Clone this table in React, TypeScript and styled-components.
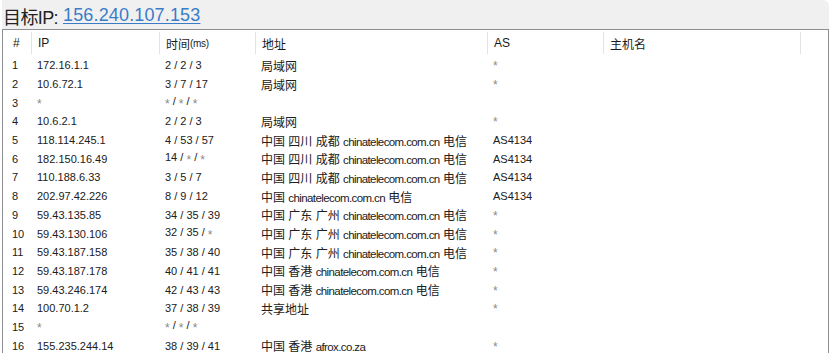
import React from "react";
import styled, { createGlobalStyle } from "styled-components";

const GlobalStyle = createGlobalStyle`
	html, body {
		margin: 0;
		padding: 0;
		background: #ffffff;
		overflow: hidden;
	}
	body {
		font-family: "Liberation Sans", "Noto Sans CJK SC", sans-serif;
		color: #1e1e1e;
	}
`;

const COLUMNS = "28px 128px 96px 232px 116px 197px 1fr";

const hops = [
	{ ip: "172.16.1.1", time: "2 / 2 / 3", addr: "局域网", as: "*" },
	{ ip: "10.6.72.1", time: "3 / 7 / 17", addr: "局域网", as: "*" },
	{ ip: "*", time: "* / * / *", addr: "", as: "" },
	{ ip: "10.6.2.1", time: "2 / 2 / 3", addr: "局域网", as: "*" },
	{ ip: "118.114.245.1", time: "4 / 53 / 57", addr: "中国 四川 成都 chinatelecom.com.cn 电信", as: "AS4134" },
	{ ip: "182.150.16.49", time: "14 / * / *", addr: "中国 四川 成都 chinatelecom.com.cn 电信", as: "AS4134" },
	{ ip: "110.188.6.33", time: "3 / 5 / 7", addr: "中国 四川 成都 chinatelecom.com.cn 电信", as: "AS4134" },
	{ ip: "202.97.42.226", time: "8 / 9 / 12", addr: "中国 chinatelecom.com.cn 电信", as: "AS4134" },
	{ ip: "59.43.135.85", time: "34 / 35 / 39", addr: "中国 广东 广州 chinatelecom.com.cn 电信", as: "*" },
	{ ip: "59.43.130.106", time: "32 / 35 / *", addr: "中国 广东 广州 chinatelecom.com.cn 电信", as: "*" },
	{ ip: "59.43.187.158", time: "35 / 38 / 40", addr: "中国 广东 广州 chinatelecom.com.cn 电信", as: "*" },
	{ ip: "59.43.187.178", time: "40 / 41 / 41", addr: "中国 香港 chinatelecom.com.cn 电信", as: "*" },
	{ ip: "59.43.246.174", time: "42 / 43 / 43", addr: "中国 香港 chinatelecom.com.cn 电信", as: "*" },
	{ ip: "100.70.1.2", time: "37 / 38 / 39", addr: "共享地址", as: "*" },
	{ ip: "*", time: "* / * / *", addr: "", as: "" },
	{ ip: "155.235.244.14", time: "38 / 39 / 41", addr: "中国 香港 afrox.co.za", as: "*" },
];

const Page = styled.div`
	height: 100vh;
	display: flex;
	flex-direction: column;
	padding: 0 2px;
	box-sizing: border-box;
`;

const TitleBar = styled.div`
	height: 29px;
	display: flex;
	align-items: center;
	padding: 2px 0 0 1px;
	box-sizing: border-box;
	background: #f0f0f0;
	border-top-right-radius: 6px;
	font-size: 18px;
	color: #222;
	white-space: nowrap;
`;

const TitleLabel = styled.span`
	letter-spacing: -0.6px;
`;

const IpLink = styled.a`
	color: #3a7cc8;
	text-decoration: underline;
	text-underline-offset: 2px;
	margin-left: 5px;
	letter-spacing: 0.15px;
`;

const ListFrame = styled.div`
	flex: 1;
	overflow: hidden;
	border: 1px solid #8e8f94;
	border-bottom: none;
	background: #fff;
`;

const HeaderRow = styled.div`
	display: grid;
	grid-template-columns: ${COLUMNS};
	height: 26px;
	align-items: center;
	font-size: 12px;
	color: #1a1a1a;
`;

const HeaderCell = styled.div<{ $first?: boolean }>`
	height: 22px;
	display: flex;
	align-items: center;
	padding-left: ${p => (p.$first ? "10px" : "6px")};
	border-left: ${p => (p.$first ? "none" : "1px solid #e3e3e3")};
	white-space: nowrap;
`;

const Small = styled.span`
	font-size: 10px;
	letter-spacing: -0.3px;
`;

const Row = styled.div`
	display: grid;
	grid-template-columns: ${COLUMNS};
	height: 18.7px;
	align-items: center;
	font-size: 11px;
	color: #202020;
`;

const Cell = styled.div<{ $first?: boolean }>`
	padding-left: ${p => (p.$first ? "9px" : "6px")};
	white-space: nowrap;
`;

const Star = styled.span`
	color: #8a8a8a;
	font-size: 12px;
	vertical-align: -3px;
`;

const Address = styled(Cell)`
	font-size: 12px;
`;

const Latin = styled.span`
	font-size: 11.5px;
	letter-spacing: -0.6px;
`;

const withStars = (text: string) =>
	text.split(/(\*)/).map((part, i) =>
		part === "*" ? <Star key={i}>*</Star> : <React.Fragment key={i}>{part}</React.Fragment>
	);

const AddressText = ({ text }: { text: string }) => (
	<>
		{text.split(/([A-Za-z.]+)/).map((part, i) =>
			/[A-Za-z]/.test(part) ? <Latin key={i}>{part}</Latin> : <React.Fragment key={i}>{part}</React.Fragment>
		)}
	</>
);

const App = () => {
	return (
		<>
			<GlobalStyle />
			<Page>
				<TitleBar>
					<TitleLabel>目标IP:</TitleLabel>
					<IpLink href="#">156.240.107.153</IpLink>
				</TitleBar>
				<ListFrame>
					<HeaderRow>
						<HeaderCell $first>#</HeaderCell>
						<HeaderCell>IP</HeaderCell>
						<HeaderCell>
							时间<Small>(ms)</Small>
						</HeaderCell>
						<HeaderCell>地址</HeaderCell>
						<HeaderCell>AS</HeaderCell>
						<HeaderCell>主机名</HeaderCell>
						<HeaderCell />
					</HeaderRow>
					{hops.map((hop, i) => (
						<Row key={i}>
							<Cell $first>{i + 1}</Cell>
							<Cell>{withStars(hop.ip)}</Cell>
							<Cell>{withStars(hop.time)}</Cell>
							<Address>
								<AddressText text={hop.addr} />
							</Address>
							<Cell>{withStars(hop.as)}</Cell>
							<Cell />
							<Cell />
						</Row>
					))}
				</ListFrame>
			</Page>
		</>
	);
};

export default App;
